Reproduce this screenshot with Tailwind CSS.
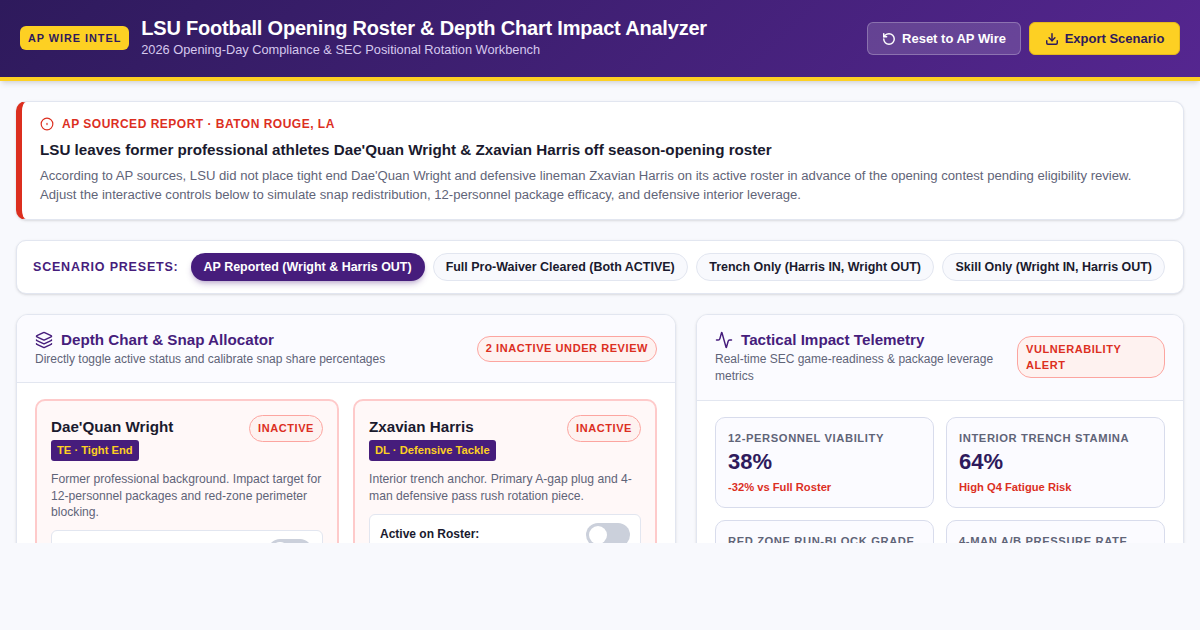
<!DOCTYPE html>
<html><head><meta charset="utf-8"><script src="https://cdn.jsdelivr.net/npm/@tailwindcss/browser@4"></script></head>
<body class="bg-[#f8f9fd] font-['Liberation_Sans',sans-serif] w-[1200px] h-[630px] overflow-hidden">
<header class="h-[81px] border-b-4 border-[#fdd023] bg-linear-135 from-[#2e1a5c] to-[#552690] px-5 flex items-center justify-between shadow-md">
  <div class="flex items-center gap-3">
    <span class="mb-[1px] bg-[#fdd023] text-[#2e1a5c] text-[10.88px] font-bold tracking-[0.96px] px-2 h-6 flex items-center rounded-md">AP WIRE INTEL</span>
    <div class="pb-[2px]">
      <h1 class="text-[20px] leading-[24px] font-bold text-white tracking-[-0.2px]">LSU Football Opening Roster &amp; Depth Chart Impact Analyzer</h1>
      <p class="text-[12.8px] leading-[18px] mt-[1px] text-[#d6c9ee]">2026 Opening-Day Compliance &amp; SEC Positional Rotation Workbench</p>
    </div>
  </div>
  <div class="flex items-center gap-2">
    <button class="h-[33px] w-[154px] flex items-center justify-center gap-[6px] rounded-md border border-white/25 bg-white/15 text-white text-[13px] font-bold">
      <svg class="w-[14px] h-[14px]" viewBox="0 0 24 24" fill="none" stroke="currentColor" stroke-width="2.5" stroke-linecap="round" stroke-linejoin="round"><path d="M3 12a9 9 0 1 0 9-9 9.75 9.75 0 0 0-6.74 2.74L3 8"/><path d="M3 3v5h5"/></svg>Reset to AP Wire</button>
    <button class="h-[33px] w-[151px] flex items-center justify-center gap-[6px] rounded-md border border-[#e6b91c] bg-[#fdd023] text-[#2e1a5c] text-[13px] font-bold">
      <svg class="w-[14px] h-[14px]" viewBox="0 0 24 24" fill="none" stroke="currentColor" stroke-width="2.5" stroke-linecap="round" stroke-linejoin="round"><path d="M12 15V3"/><path d="M21 15v4a2 2 0 0 1-2 2H5a2 2 0 0 1-2-2v-4"/><path d="m7 10 5 5 5-5"/></svg>Export Scenario</button>
  </div>
</header>
<main class="h-[462px] overflow-hidden px-4 pt-5 flex flex-col gap-5">
  <section class="shrink-0 h-[119px] bg-white rounded-[10px] border border-[#e2e6f0] border-l-[6px] border-l-[#dc2f1f] pl-[18px] pr-5 pt-[14px] shadow-sm">
    <div class="flex items-center gap-2 text-[12px] leading-[16px] font-bold tracking-[0.5px] text-[#dc2f1f]">
      <svg class="w-[14px] h-[14px]" viewBox="0 0 24 24" fill="none" stroke="currentColor" stroke-width="2" stroke-linecap="round"><circle cx="12" cy="12" r="10"/><path d="M12 11v2"/></svg>
      AP SOURCED REPORT · BATON ROUGE, LA</div>
    <h2 class="mt-[8px] text-[15.2px] leading-[20px] font-bold text-[#1a1a2e]">LSU leaves former professional athletes Dae'Quan Wright &amp; Zxavian Harris off season-opening roster</h2>
    <p class="mt-[6px] text-[13.12px] leading-[19px] text-[#5f6478]">According to AP sources, LSU did not place tight end Dae'Quan Wright and defensive lineman Zxavian Harris on its active roster in advance of the opening contest pending eligibility review. Adjust the interactive controls below to simulate snap redistribution, 12-personnel package efficacy, and defensive interior leverage.</p>
  </section>
  <section class="shrink-0 h-[54px] bg-white rounded-[10px] border border-[#e2e6f0] px-4 flex items-center gap-2 shadow-sm">
    <span class="text-[12.5px] font-bold tracking-[0.8px] text-[#461d7c] mr-1">SCENARIO PRESETS:</span>
    <span class="h-7 px-[13px] flex items-center rounded-full bg-[#461d7c] text-white text-[12.48px] font-bold shadow-md shadow-[#461d7c]/25">AP Reported (Wright &amp; Harris OUT)</span>
    <span class="h-7 px-3 flex items-center rounded-full bg-[#f8f9fd] border border-[#e2e6f0] text-[#1a1a2e] text-[12.48px] font-bold">Full Pro-Waiver Cleared (Both ACTIVE)</span>
    <span class="h-7 px-[12.5px] flex items-center rounded-full bg-[#f8f9fd] border border-[#e2e6f0] text-[#1a1a2e] text-[12.48px] font-bold">Trench Only (Harris IN, Wright OUT)</span>
    <span class="h-7 px-3 flex items-center rounded-full bg-[#f8f9fd] border border-[#e2e6f0] text-[#1a1a2e] text-[12.48px] font-bold">Skill Only (Wright IN, Harris OUT)</span>
  </section>
  <section class="shrink-0 grid grid-cols-[660px_488px] gap-5 items-start">
    <div class="bg-white rounded-xl border border-[#e2e6f0] shadow-sm h-[400px] overflow-hidden">
      <div class="h-[68px] bg-[#fbfbff] border-b border-[#e2e6f0] px-[18px] flex items-center justify-between">
        <div>
          <div class="flex items-center gap-2 text-[15.2px] leading-[20px] font-bold text-[#461d7c]">
            <svg class="w-[18px] h-[18px]" viewBox="0 0 24 24" fill="none" stroke="currentColor" stroke-width="2" stroke-linecap="round" stroke-linejoin="round"><path d="M12.83 2.18a2 2 0 0 0-1.66 0L2.6 6.08a1 1 0 0 0 0 1.83l8.58 3.91a2 2 0 0 0 1.66 0l8.58-3.9a1 1 0 0 0 0-1.83z"/><path d="M2 12a1 1 0 0 0 .58.91l8.6 3.91a2 2 0 0 0 1.65 0l8.58-3.9A1 1 0 0 0 22 12"/><path d="M2 17a1 1 0 0 0 .58.91l8.6 3.91a2 2 0 0 0 1.65 0l8.58-3.9A1 1 0 0 0 22 17"/></svg>
            Depth Chart &amp; Snap Allocator</div>
          <p class="mt-[1px] text-[12px] leading-[16px] text-[#5f6478]">Directly toggle active status and calibrate snap share percentages</p>
        </div>
        <span class="h-[26px] px-2 flex items-center rounded-full bg-[#fef2f0] border border-[#fca5a0] text-[#dc2f1f] text-[11.04px] font-bold tracking-[0.55px]">2 INACTIVE UNDER REVIEW</span>
      </div>
      <div class="px-[18px] pt-4 grid grid-cols-2 gap-[14px] items-start">
        <div class="bg-[#fff8f8] border-2 border-[#fecaca] rounded-[10px] px-[14px] pt-[14px] h-[300px]">
          <div class="flex items-start justify-between">
            <div class="pt-[2px]">
              <div class="text-[15.2px] leading-[20px] font-bold text-[#1a1a2e]">Dae'Quan Wright</div>
              <span class="inline-flex mt-[3px] h-[21px] items-center px-[6px] rounded-[3px] bg-[#461d7c] text-[#fdd023] text-[11.2px] font-bold">TE · Tight End</span>
            </div>
            <span class="h-[27px] px-2 flex items-center rounded-full bg-[#fef2f0] border border-[#fca5a0] text-[#dc2f1f] text-[11.04px] font-bold tracking-[0.55px]">INACTIVE</span>
          </div>
          <p class="mt-[10px] text-[12.16px] leading-[16.4px] text-[#5f6478]">Former professional background. Impact target for 12-personnel packages and red-zone perimeter blocking.</p>
          <div class="mt-[10px] bg-white border border-[#e2e6f0] rounded-md px-[10px] py-2 flex items-center justify-between">
            <span class="pb-[2px] text-[12px] font-bold text-[#1a1a2e]">Active on Roster:</span>
            <span class="w-[44px] h-6 rounded-full bg-[#cbd0db] p-[3px] flex"><span class="w-[18px] h-[18px] rounded-full bg-white"></span></span>
          </div>
        </div>
        <div class="bg-[#fff8f8] border-2 border-[#fecaca] rounded-[10px] px-[14px] pt-[14px] h-[300px]">
          <div class="flex items-start justify-between">
            <div class="pt-[2px]">
              <div class="text-[15.2px] leading-[20px] font-bold text-[#1a1a2e]">Zxavian Harris</div>
              <span class="inline-flex mt-[3px] h-[21px] items-center px-[6px] rounded-[3px] bg-[#461d7c] text-[#fdd023] text-[11.2px] font-bold">DL · Defensive Tackle</span>
            </div>
            <span class="h-[27px] px-2 flex items-center rounded-full bg-[#fef2f0] border border-[#fca5a0] text-[#dc2f1f] text-[11.04px] font-bold tracking-[0.55px]">INACTIVE</span>
          </div>
          <p class="mt-[10px] text-[12.16px] leading-[16.4px] text-[#5f6478]">Interior trench anchor. Primary A-gap plug and 4-man defensive pass rush rotation piece.</p>
          <div class="mt-[10px] bg-white border border-[#e2e6f0] rounded-md px-[10px] py-2 flex items-center justify-between">
            <span class="pb-[2px] text-[12px] font-bold text-[#1a1a2e]">Active on Roster:</span>
            <span class="w-[44px] h-6 rounded-full bg-[#cbd0db] p-[3px] flex"><span class="w-[18px] h-[18px] rounded-full bg-white"></span></span>
          </div>
        </div>
      </div>
    </div>
    <div class="bg-white rounded-xl border border-[#e2e6f0] shadow-sm h-[400px] overflow-hidden">
      <div class="h-[86px] bg-[#fbfbff] border-b border-[#e2e6f0] px-[18px] flex items-center justify-between gap-5">
        <div>
          <div class="flex items-center gap-2 text-[15.2px] leading-[20px] font-bold text-[#461d7c]">
            <svg class="w-[18px] h-[18px]" viewBox="0 0 24 24" fill="none" stroke="currentColor" stroke-width="2" stroke-linecap="round" stroke-linejoin="round"><path d="M22 12h-2.48a2 2 0 0 0-1.93 1.46l-2.35 8.36a.25.25 0 0 1-.48 0L9.24 2.18a.25.25 0 0 0-.48 0l-2.35 8.36A2 2 0 0 1 4.49 12H2"/></svg>
            Tactical Impact Telemetry</div>
          <p class="mt-[1px] text-[12px] leading-[17px] text-[#5f6478]">Real-time SEC game-readiness &amp; package leverage metrics</p>
        </div>
        <span class="mb-[1px] shrink-0 w-[148px] h-[42px] px-2 flex items-center rounded-[14px] bg-[#fef2f0] border border-[#fca5a0] text-[#dc2f1f] text-[11.04px] leading-4 font-bold tracking-[0.55px]">VULNERABILITY ALERT</span>
      </div>
      <div class="p-[18px] pt-4 grid grid-cols-2 gap-x-3 gap-y-3">
        <div class="h-[91px] bg-[#fbfbff] border border-[#d8dcec] rounded-[10px] px-3 pt-[12px]">
          <div class="text-[11.2px] leading-[16px] font-bold tracking-[0.6px] text-[#5f6478]">12-PERSONNEL VIABILITY</div>
          <div class="text-[22px] leading-[26px] mt-[3px] font-bold text-[#2e1a5c]">38%</div>
          <div class="text-[11.2px] leading-[16px] mt-[4px] font-bold text-[#dc2f1f]">-32% vs Full Roster</div>
        </div>
        <div class="h-[91px] bg-[#fbfbff] border border-[#d8dcec] rounded-[10px] px-3 pt-[12px]">
          <div class="text-[11.2px] leading-[16px] font-bold tracking-[0.6px] text-[#5f6478]">INTERIOR TRENCH STAMINA</div>
          <div class="text-[22px] leading-[26px] mt-[3px] font-bold text-[#2e1a5c]">64%</div>
          <div class="text-[11.2px] leading-[16px] mt-[4px] font-bold text-[#dc2f1f]">High Q4 Fatigue Risk</div>
        </div>
        <div class="h-[91px] bg-[#fbfbff] border border-[#d8dcec] rounded-[10px] px-3 pt-[12px]">
          <div class="text-[11.2px] leading-[16px] font-bold tracking-[0.6px] text-[#5f6478]">RED ZONE RUN-BLOCK GRADE</div>
        </div>
        <div class="h-[91px] bg-[#fbfbff] border border-[#d8dcec] rounded-[10px] px-3 pt-[12px]">
          <div class="text-[11.2px] leading-[16px] font-bold tracking-[0.6px] text-[#5f6478]">4-MAN A/B PRESSURE RATE</div>
        </div>
      </div>
    </div>
  </section>
</main>
</body></html>
